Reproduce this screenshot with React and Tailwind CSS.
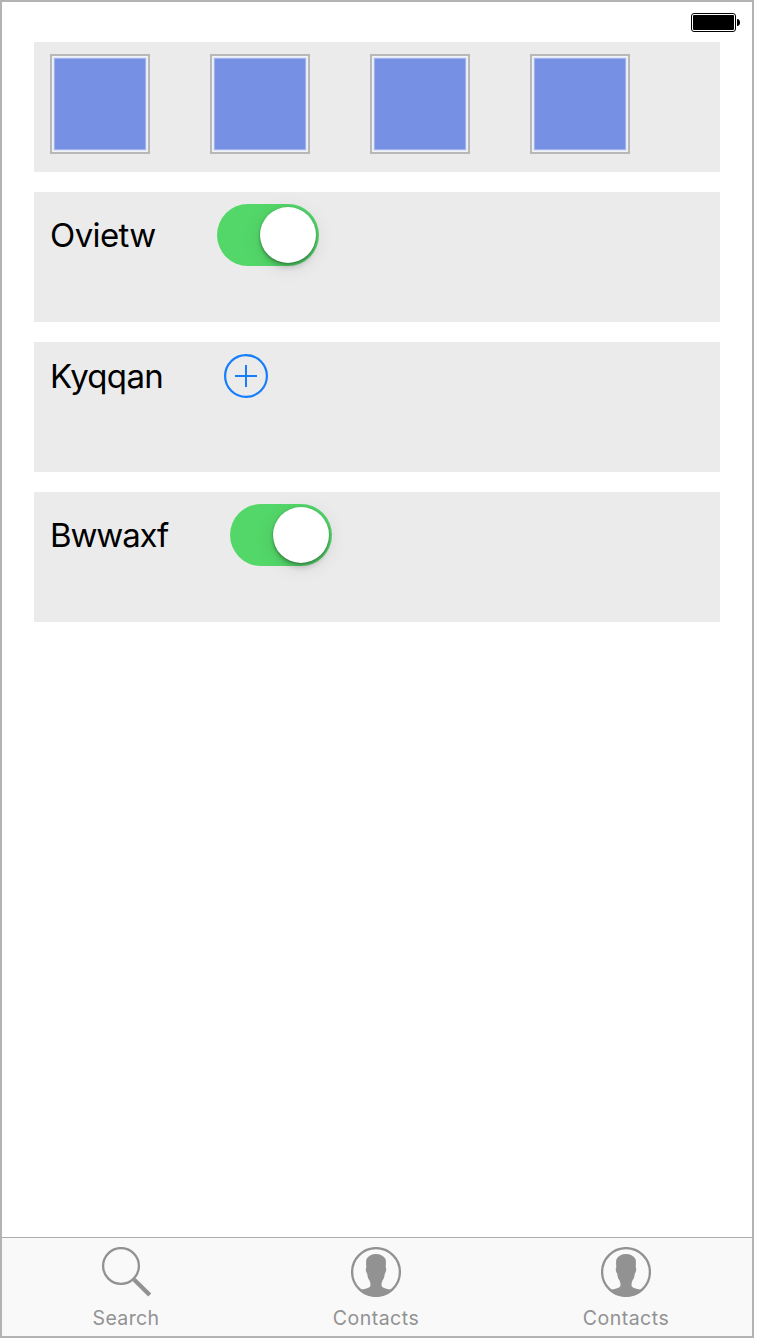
import React from "react";

function Panel({ children }) {
  return (
    <section className="flex h-[130px] items-start bg-[#ebebeb] px-4 pt-3">
      <div className="flex items-center gap-[60px]">{children}</div>
    </section>
  );
}

function Swatch() {
  return (
    <div className="size-[100px] border-2 border-[#b8b8b8] bg-[#f1f3f5] p-px">
      <div className="size-full border border-[#e0e6fa] bg-[#a3b3ed] p-px">
        <div className="size-full bg-[#7690e3]" />
      </div>
    </div>
  );
}

function Label({ className, children }) {
  return (
    <span className={`block whitespace-nowrap text-[33px] leading-10 text-black ${className}`}>
      {children}
    </span>
  );
}

function Switch() {
  return (
    <button
      type="button"
      role="switch"
      aria-checked="true"
      className="flex h-[62px] w-[102px] items-center justify-end rounded-full bg-[#53d769] pr-[3px]"
    >
      <span className="size-14 rounded-full bg-white shadow-[0_6px_5px_-1px_rgba(0,0,0,0.13),0_1px_3px_rgba(0,0,0,0.36),0_4px_20px_rgba(0,0,0,0.10)]" />
    </button>
  );
}

function AddButton() {
  return (
    <button type="button" className="size-11">
      <svg viewBox="0 0 44 44" className="block size-11" fill="none" stroke="#157efb" strokeWidth="2">
        <circle cx="22" cy="22" r="20.9" strokeWidth="2.2" />
        <path d="M11 22h22M22 11v22" />
      </svg>
    </button>
  );
}

function SearchIcon() {
  return (
    <svg viewBox="0 0 50 50" className="block size-[50px]" fill="none" stroke="#929292">
      <circle cx="20" cy="19" r="17.9" strokeWidth="2.3" />
      <path d="M33 32.5L48.7 48" strokeWidth="4.2" />
    </svg>
  );
}

function ContactIcon() {
  return (
    <svg viewBox="0 0 50 50" className="block size-[50px]">
      <circle cx="25" cy="25" r="23.9" fill="none" stroke="#929292" strokeWidth="2.3" />
      <path
        fill="#929292"
        d="M25 7C21 7.1 17.4 8.8 15.8 11.5C14.7 13.4 15.1 16.5 15.3 20.4C14.3 21 14.8 25.4 16.2 26.5C16.5 29.5 17.1 31.7 18.4 33.3C19.3 35.2 19.7 36.8 19.4 39C18.5 41.6 13.2 41.7 8.5 43.2C17.5 51.8 32.5 51.8 41.5 43.2C36.8 41.7 31.5 41.6 30.6 39C30.3 36.8 30.7 35.2 31.6 33.3C32.9 31.7 33.5 29.5 33.8 26.5C35.2 25.4 35.7 21 34.7 20.4C34.9 16.5 35.3 13.4 34.2 11.5C32.6 8.8 29 7.1 25 7Z"
      />
    </svg>
  );
}

function Tab({ icon, labelClass, children }) {
  return (
    <button type="button" className="flex w-[250px] shrink-0 flex-col items-center pt-[9px] text-[#929292]">
      {icon}
      <span className={`mt-[9px] block text-[19.5px] leading-6 ${labelClass}`}>{children}</span>
    </button>
  );
}

function Battery() {
  return (
    <svg viewBox="0 0 49 19" className="block h-[19px] w-[49px]">
      <rect x="0.5" y="0.5" width="44" height="18" rx="2.5" fill="white" stroke="black" />
      <rect x="2" y="2" width="41" height="15" rx="1" fill="black" />
      <path d="M46 6c2 0 3 1.2 3 3.5S48 13 46 13Z" fill="black" />
    </svg>
  );
}

export default function App() {
  return (
    <div className="h-[1340px] w-[760px] bg-white font-['Inter','Liberation_Sans',sans-serif]">
      <div className="flex h-[1338px] w-[754px] flex-col border-2 border-[#b3b3b3] bg-white">
        <header className="flex h-10 shrink-0 justify-end pr-3 pt-[11px]">
          <Battery />
        </header>
        <main className="flex flex-1 flex-col gap-5 px-8">
          <Panel>
            <Swatch />
            <Swatch />
            <Swatch />
            <Swatch />
          </Panel>
          <Panel>
            <Label className="w-[107px] tracking-[-0.6px]">Ovietw</Label>
            <Switch />
          </Panel>
          <Panel>
            <Label className="w-[114px] tracking-[-0.7px]">Kyqqan</Label>
            <AddButton />
          </Panel>
          <Panel>
            <Label className="w-[120px] tracking-[-1.15px]">Bwwaxf</Label>
            <Switch />
          </Panel>
        </main>
        <nav className="h-[99px] shrink-0 border-t border-[#acacac] bg-[#f9f9f9]">
          <div className="-ml-px flex">
            <Tab icon={<SearchIcon />} labelClass="tracking-[0.35px]">Search</Tab>
            <Tab icon={<ContactIcon />} labelClass="tracking-[0.5px]">Contacts</Tab>
            <Tab icon={<ContactIcon />} labelClass="tracking-[0.5px]">Contacts</Tab>
          </div>
        </nav>
      </div>
    </div>
  );
}
